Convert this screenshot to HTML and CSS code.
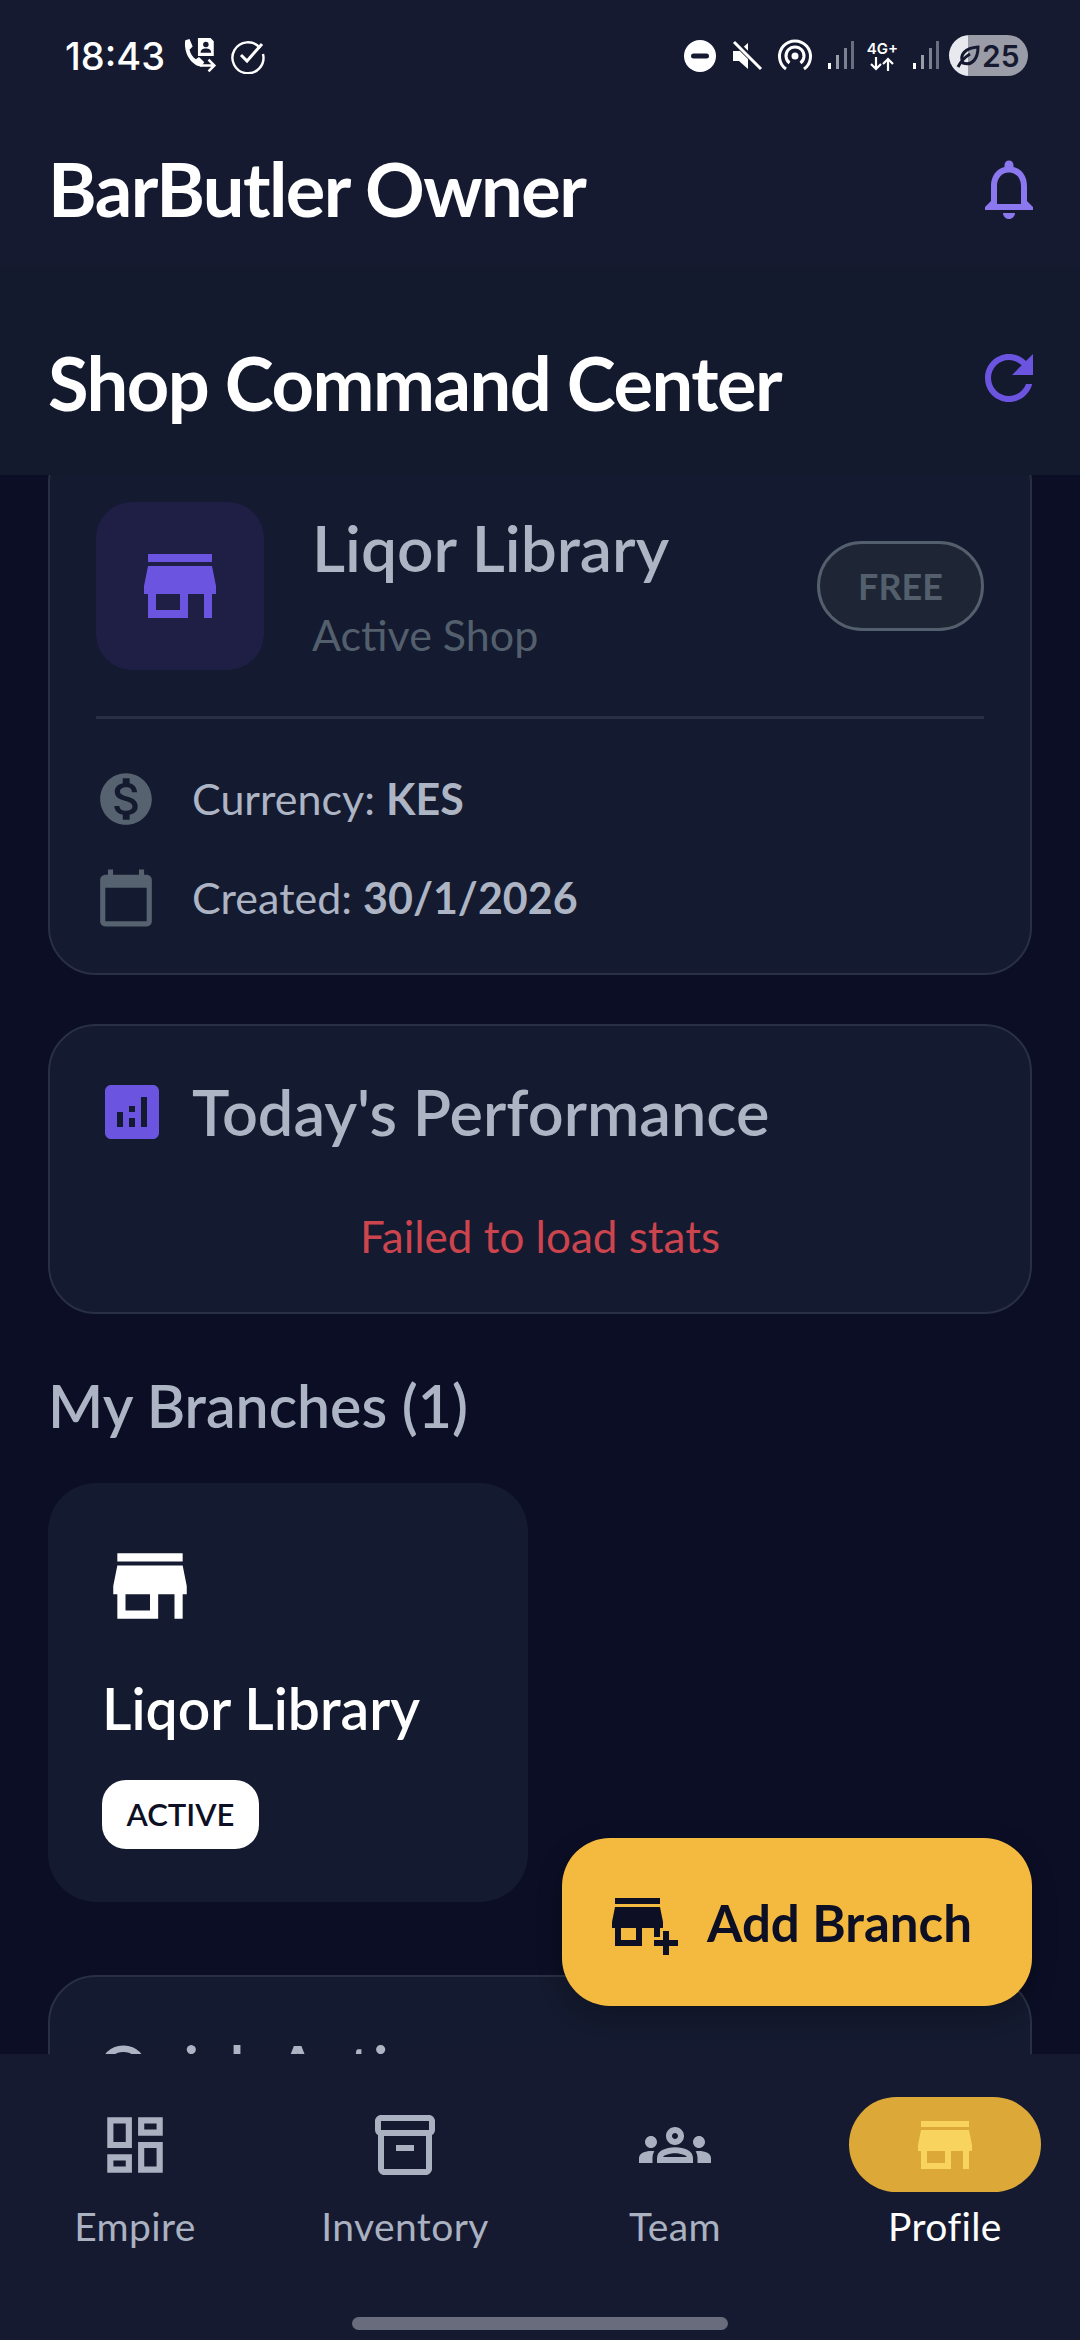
FILE: index.html
```html
<!DOCTYPE html>
<html lang="en">
<head>
    <meta charset="UTF-8">
    <meta name="viewport" content="width=device-width, initial-scale=1.0">
    <title>BarButler Owner</title>
    <link rel="stylesheet" href="styles.css">
</head>
<body>
    <div class="phone">
        <div class="top-area">
            <div class="status-bar">
                <div class="status-left">
                    <span class="clock">18:43</span>
                    <svg class="st-call" viewBox="0 0 36 36" width="38" height="38">
                        <path fill="#fff" d="M5 3l4-1 3 7-3 3c1 4 3 7 6 9l3-2 5 5-3 4c-9-1-17-13-15-25z"/>
                        <path fill="#fff" d="M17 1h12l3 3v14H17z"/>
                        <circle cx="24.500" cy="7" r="2.600" fill="#151a30"/>
                        <path fill="#151a30" d="M19.500 15c0-3 2-4 5-4s5 1 5 4z"/>
                        <path fill="none" stroke="#fff" stroke-width="2.400" d="M19 27h13M27 21.500l5.500 5.500-5.500 5.500"/>
                    </svg>
                    <svg class="st-check" viewBox="0 0 36 36" width="36" height="36">
                        <path fill="none" stroke="#fff" stroke-width="2.400" d="M30 10a15.500 15.500 0 1 0 3 6"/>
                        <path fill="none" stroke="#fff" stroke-width="3" d="M11 17l6 6L32 6"/>
                    </svg>
                </div>
                <div class="status-right">
                    <svg viewBox="0 0 34 34" width="34" height="34"><circle cx="17" cy="17" r="16" fill="#fff"/><rect x="8" y="14.500" width="18" height="5" rx="2.500" fill="#151a30"/></svg>
                    <svg class="st-gap" viewBox="0 0 32 32" width="32" height="32">
                        <path fill="#fff" d="M2 11h6l9-8v26l-9-8H2z"/>
                        <path stroke="#151a30" stroke-width="6" d="M3 1l28 28"/>
                        <path stroke="#fff" stroke-width="3" d="M3 2l27 27"/>
                    </svg>
                    <svg class="st-gap" viewBox="0 0 36 34" width="36" height="34">
                        <g fill="none" stroke="#fff" stroke-width="3">
                            <path d="M9 30a15.500 15.500 0 1 1 18 0"/>
                            <path d="M12.500 24a9 9 0 1 1 11 0"/>
                        </g>
                        <circle cx="18" cy="17" r="3.500" fill="#fff"/>
                    </svg>
                    <svg class="st-gap" viewBox="0 0 28 32" width="28" height="32">
                        <rect x="1" y="23" width="3" height="6" fill="#fff"/>
                        <rect x="9" y="15" width="3" height="14" fill="#9a9ca8"/>
                        <rect x="17" y="8" width="3" height="21" fill="#7d8090"/>
                        <rect x="24" y="1" width="3" height="28" fill="#6b6e7e"/>
                    </svg>
                    <div class="st-net">
                        <span>4G+</span>
                        <svg viewBox="0 0 28 14" width="28" height="14">
                            <path fill="none" stroke="#fff" stroke-width="2.200" d="M8 0v12M3 7l5 5 5-5M20 14V2M15 7l5-5 5 5"/>
                        </svg>
                    </div>
                    <svg class="st-gap" viewBox="0 0 28 32" width="28" height="32">
                        <rect x="1" y="23" width="3" height="6" fill="#fff"/>
                        <rect x="9" y="15" width="3" height="14" fill="#9a9ca8"/>
                        <rect x="17" y="8" width="3" height="21" fill="#7d8090"/>
                        <rect x="24" y="1" width="3" height="28" fill="#6b6e7e"/>
                    </svg>
                    <div class="battery">
                        <svg class="leaf" viewBox="0 0 24 24" width="24" height="24">
                            <path fill="none" stroke="#151a30" stroke-width="3" d="M2 23c3-6 7-10 12-13M7 19C3 11 9 4 22 3c0 12-6 19-15 16z"/>
                        </svg>
                        <span>25</span>
                    </div>
                </div>
            </div>
            <div class="header-row">
                <h1>BarButler Owner</h1>
                <svg viewBox="0 0 24 24" width="72" height="72"><path fill="#8b78ee" d="M12 22c1.100 0 2-.9 2-2h-4c0 1.100.89 2 2 2zm6-6v-5c0-3.070-1.640-5.640-4.500-6.320V4c0-.83-.67-1.500-1.500-1.500s-1.500.67-1.500 1.500v.68C7.630 5.360 6 7.920 6 11v5l-2 2v1h16v-1l-2-2zm-2 1H8v-6c0-2.480 1.510-4.500 4-4.500s4 2.020 4 4.500v6z"/></svg>
            </div>
            <div class="header-row sub">
                <h1>Shop Command Center</h1>
                <svg class="refresh" viewBox="0 0 24 24" width="72" height="72"><path fill="#6a54e0" d="M17.650 6.350C16.200 4.900 14.210 4 12 4c-4.420 0-7.990 3.580-7.990 8s3.570 8 7.990 8c3.730 0 6.840-2.550 7.730-6h-2.080c-.82 2.330-3.040 4-5.650 4-3.310 0-6-2.690-6-6s2.690-6 6-6c1.660 0 3.140.69 4.220 1.780L13 11h7V4l-2.350 2.350z"/></svg>
            </div>
        </div>

        <div class="content">
            <div class="scroller">
                <div class="card shop-card">
                    <div class="shop-head">
                        <div class="shop-icon">
                            <svg viewBox="0 0 24 24" width="96" height="96"><path fill="#6a54e0" d="M20 4H4v2h16V4zm1 10v-2l-1-5H4l-1 5v2h1v6h10v-6h4v6h2v-6h1zm-9 4H6v-4h6v4z"/></svg>
                        </div>
                        <div class="shop-name">
                            <h2>Liqor Library</h2>
                            <p>Active Shop</p>
                        </div>
                        <span class="plan-badge">FREE</span>
                    </div>
                    <div class="divider"></div>
                    <div class="info-row">
                        <svg viewBox="0 0 24 24" width="62" height="62"><path fill="#56626f" d="M12 2C6.480 2 2 6.480 2 12s4.480 10 10 10 10-4.480 10-10S17.520 2 12 2zm1.410 16.090V20h-2.670v-1.930c-1.710-.36-3.160-1.460-3.270-3.400h1.960c.1 1.050.82 1.870 2.650 1.870 1.960 0 2.400-.98 2.400-1.590 0-.83-.44-1.610-2.670-2.140-2.480-.6-4.180-1.620-4.180-3.670 0-1.720 1.390-2.840 3.110-3.210V4h2.670v1.950c1.860.45 2.790 1.860 2.850 3.390H14.300c-.05-1.110-.64-1.870-2.220-1.870-1.500 0-2.400.68-2.400 1.640 0 .84.65 1.390 2.670 1.910s4.180 1.390 4.180 3.910c-.01 1.830-1.380 2.830-3.120 3.160z"/></svg>
                        <span>Currency: <b>KES</b></span>
                    </div>
                    <div class="info-row">
                        <svg viewBox="0 0 24 24" width="62" height="62"><path fill="#56626f" d="M20 3h-1V1h-2v2H7V1H5v2H4c-1.100 0-2 .9-2 2v16c0 1.100.9 2 2 2h16c1.100 0 2-.9 2-2V5c0-1.100-.9-2-2-2zm0 18H4V8h16v13z"/></svg>
                        <span>Created: <b>30/1/2026</b></span>
                    </div>
                </div>

                <div class="card perf-card">
                    <div class="perf-title">
                        <svg viewBox="0 0 24 24" width="72" height="72"><path fill="#6a54e0" d="M19 3H5c-1.100 0-2 .9-2 2v14c0 1.100.9 2 2 2h14c1.100 0 2-.9 2-2V5c0-1.100-.9-2-2-2zM9 17H7v-5h2v5zm4 0h-2v-3h2v3zm0-5h-2v-2h2v2zm4 5h-2V7h2v10z"/></svg>
                        <h2>Today's Performance</h2>
                    </div>
                    <p class="error-text">Failed to load stats</p>
                </div>

                <h2 class="section-title">My Branches (1)</h2>
                <div class="branch-card">
                    <svg viewBox="0 0 24 24" width="98" height="98"><path fill="#fff" d="M20 4H4v2h16V4zm1 10v-2l-1-5H4l-1 5v2h1v6h10v-6h4v6h2v-6h1zm-9 4H6v-4h6v4z"/></svg>
                    <h3>Liqor Library</h3>
                    <span class="active-badge">ACTIVE</span>
                </div>

                <div class="card actions-card">
                    <h2>Quick Actions</h2>
                </div>
            </div>

            <div class="fab">
                <svg viewBox="0 0 24 24" width="72" height="72"><path fill="#0d1024" d="M15 17h2v-3h1v-2l-1-5H2l-1 5v2h1v6h9v-6h4v3zm-6 1H4v-4h5v4zM2 4h15v2H2zM20 18v-3h-2v3h-3v2h3v3h2v-3h3v-2z"/></svg>
                <span>Add Branch</span>
            </div>
        </div>

        <div class="bottom-nav">
            <div class="nav-items">
                <div class="nav-item">
                    <div class="nav-icon">
                        <svg viewBox="0 0 24 24" width="74" height="74"><path fill="#aab1c0" d="M19 5v2h-4V5h4M9 5v6H5V5h4m10 8v6h-4v-6h4M9 17v2H5v-2h4M21 3h-8v6h8V3zM11 3H3v10h8V3zm10 8h-8v10h8V11zm-10 4H3v6h8v-6z"/></svg>
                    </div>
                    <span>Empire</span>
                </div>
                <div class="nav-item">
                    <div class="nav-icon">
                        <svg viewBox="0 0 24 24" width="72" height="72"><path fill="#aab1c0" d="M20 2H4c-1 0-2 .9-2 2v3.010c0 .72.43 1.340 1 1.690V20c0 1.100 1.100 2 2 2h14c.9 0 2-.9 2-2V8.700c.57-.35 1-.97 1-1.690V4c0-1.100-1-2-2-2zm-1 18H5V9h14v11zm1-13H4V4h16v3zM9 12h6v2H9z"/></svg>
                    </div>
                    <span>Inventory</span>
                </div>
                <div class="nav-item">
                    <div class="nav-icon">
                        <svg viewBox="0 0 24 24" width="72" height="72"><path fill="#aab1c0" d="M4 13c1.100 0 2-.9 2-2s-.9-2-2-2-2 .9-2 2 .9 2 2 2zm1.130 1.100c-.37-.06-.74-.1-1.130-.1-.99 0-1.930.21-2.780.58C.48 14.900 0 15.620 0 16.430V18h4.500v-1.610c0-.83.23-1.610.63-2.290zM20 13c1.100 0 2-.9 2-2s-.9-2-2-2-2 .9-2 2 .9 2 2 2zm4 3.430c0-.81-.48-1.530-1.220-1.850-.85-.37-1.790-.58-2.780-.58-.39 0-.76.04-1.130.1.4.68.63 1.460.63 2.290V18H24v-1.570zm-7.760-2.780c-1.170-.52-2.610-.9-4.240-.9-1.630 0-3.070.39-4.240.9C6.680 14.130 6 15.210 6 16.390V18h12v-1.610c0-1.180-.68-2.260-1.760-2.740zM8.070 16c.09-.23.13-.39.91-.69.97-.38 1.990-.56 3.020-.56s2.050.18 3.020.56c.77.3.81.46.91.69H8.070zM12 8c.55 0 1 .45 1 1s-.45 1-1 1-1-.45-1-1 .45-1 1-1m0-2c-1.660 0-3 1.340-3 3s1.340 3 3 3 3-1.340 3-3-1.340-3-3-3z"/></svg>
                    </div>
                    <span>Team</span>
                </div>
                <div class="nav-item active">
                    <div class="nav-icon">
                        <svg viewBox="0 0 24 24" width="72" height="72"><path fill="#f8d35e" d="M20 4H4v2h16V4zm1 10v-2l-1-5H4l-1 5v2h1v6h10v-6h4v6h2v-6h1zm-9 4H6v-4h6v4z"/></svg>
                    </div>
                    <span>Profile</span>
                </div>
            </div>
            <div class="home-bar"></div>
        </div>
    </div>
</body>
</html>
```

FILE: styles.css
```css
/* General Reset */
* {
    margin: 0;
    padding: 0;
    box-sizing: border-box;
}

body {
    font-family: Lato, "Noto Sans", sans-serif;
    background-color: #0b0e25;
    color: #ffffff;
}

svg {
    display: block;
    flex-shrink: 0;
}

.phone {
    width: 1080px;
    height: 2340px;
    display: flex;
    flex-direction: column;
    overflow: hidden;
}

/* Top area */
.top-area {
    height: 475px;
    background-color: #151a30;
    flex-shrink: 0;
}

.status-bar {
    height: 111px;
    padding: 0 52px 0 65px;
    display: flex;
    justify-content: space-between;
    align-items: center;
}

.status-left,
.status-right {
    display: flex;
    align-items: center;
}

.clock {
    font-family: Inter, sans-serif;
    font-size: 38px;
    font-weight: 500;
    width: 115px;
}

.st-check {
    margin-left: 12px;
}

.st-gap {
    margin-left: 14px;
}

.st-net {
    margin-left: 12px;
    display: flex;
    flex-direction: column;
    align-items: center;
    font-family: Inter, sans-serif;
    font-size: 15px;
    font-weight: 600;
    line-height: 17px;
}

.battery {
    margin-left: 9px;
    width: 79px;
    height: 41px;
    border-radius: 21px;
    background: linear-gradient(90deg, #e8e9ee 0 19px, #9a9ca8 19px);
    display: flex;
    align-items: center;
    padding-left: 7px;
    color: #151a30;
    font-family: Inter, sans-serif;
    font-size: 30px;
    font-weight: 600;
}

.leaf {
    margin-right: 2px;
}

.header-row {
    height: 155px;
    padding: 0 35px 0 48px;
    display: flex;
    justify-content: space-between;
    align-items: center;
}

.header-row.sub {
    height: 209px;
    padding-top: 23px;
    background-color: #141a2e;
}

.refresh {
    margin-top: -8px;
}

h1 {
    font-size: 74px;
    font-weight: 700;
    letter-spacing: -1.500px;
}

/* Scrolling content */
.content {
    flex: 1;
    position: relative;
    overflow: hidden;
}

.scroller {
    margin-top: -40px;
    padding: 0 48px;
}

.card {
    background-color: #141a2f;
    border: 2px solid #2a3044;
    border-radius: 48px;
}

.shop-card {
    height: 540px;
    padding: 65px 46px 0;
}

.shop-head {
    display: flex;
    align-items: center;
    height: 168px;
}

.shop-icon {
    width: 168px;
    height: 168px;
    border-radius: 36px;
    background-color: #1f1e45;
    display: flex;
    align-items: center;
    justify-content: center;
}

.shop-name {
    margin-left: 48px;
    flex: 1;
}

.shop-name h2 {
    font-size: 64px;
    font-weight: 600;
    line-height: 72px;
    color: #adb4c4;
}

.shop-name p {
    font-size: 43px;
    line-height: 50px;
    color: #535f6c;
    margin-top: 26px;
}

.plan-badge {
    width: 167px;
    height: 90px;
    border-radius: 45px;
    border: 3px solid #535f6c;
    background-color: #1e2534;
    color: #535f6c;
    font-size: 36px;
    font-weight: 700;
    display: flex;
    align-items: center;
    justify-content: center;
}

.divider {
    height: 3px;
    background-color: #2a3044;
    margin: 46px 0 30px;
}

.info-row {
    height: 99px;
    display: flex;
    align-items: center;
    gap: 35px;
    margin-left: -1px;
    font-size: 43px;
    color: #adb4c4;
}

.info-row b {
    font-weight: 700;
}

.perf-card {
    height: 290px;
    margin-top: 49px;
    padding: 48px 46px 0;
}

.perf-title {
    display: flex;
    align-items: center;
    gap: 24px;
}

.perf-title h2 {
    font-size: 63px;
    font-weight: 600;
    color: #adb4c4;
}

.error-text {
    margin-top: 61px;
    text-align: center;
    font-size: 44px;
    color: #cc444e;
}

.section-title {
    margin-top: 56px;
    height: 72px;
    line-height: 72px;
    font-size: 59px;
    font-weight: 600;
    color: #adb4c4;
}

.branch-card {
    width: 480px;
    height: 419px;
    margin-top: 41px;
    padding: 54px 54px 0;
    border-radius: 48px;
    background-color: #141a2f;
}

.branch-card svg {
    margin-left: -1px;
}

.branch-card h3 {
    margin-top: 43px;
    font-size: 57px;
    font-weight: 600;
    line-height: 60px;
    white-space: nowrap;
}

.active-badge {
    display: inline-block;
    margin-top: 42px;
    width: 157px;
    height: 69px;
    line-height: 69px;
    text-align: center;
    border-radius: 24px;
    background-color: #ffffff;
    color: #0d1024;
    font-size: 31px;
    font-weight: 600;
}

.actions-card {
    height: 400px;
    margin-top: 73px;
    padding: 53px 48px;
}

.actions-card h2 {
    font-size: 63px;
    font-weight: 600;
    color: #adb4c4;
}

.fab {
    position: absolute;
    right: 48px;
    top: 1363px;
    width: 470px;
    height: 168px;
    border-radius: 48px;
    background-color: #f4ba40;
    box-shadow: 0 8px 24px rgba(0, 0, 0, 0.25);
    color: #0d1024;
    display: flex;
    align-items: center;
    padding-left: 47px;
    gap: 26px;
    font-size: 51px;
    font-weight: 700;
}

/* Bottom navigation */
.bottom-nav {
    height: 286px;
    flex-shrink: 0;
    background-color: #151a30;
    position: relative;
}

.nav-items {
    display: grid;
    grid-template-columns: repeat(4, 1fr);
    padding: 43px 0 0;
}

.nav-item {
    display: flex;
    flex-direction: column;
    align-items: center;
    color: #aab1c0;
    font-size: 39px;
    letter-spacing: 0.400px;
    gap: 11px;
}

.nav-item.active {
    color: #ffffff;
}

.nav-icon {
    width: 192px;
    height: 95px;
    border-radius: 48px;
    display: flex;
    align-items: center;
    justify-content: center;
}

.nav-item.active .nav-icon {
    background-color: #dca838;
}

.home-bar {
    position: absolute;
    left: 352px;
    bottom: 10px;
    width: 376px;
    height: 13px;
    border-radius: 7px;
    background-color: #686c7c;
}
```
